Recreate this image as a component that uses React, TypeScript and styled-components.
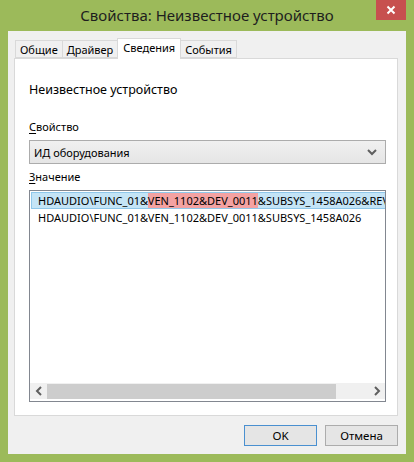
import { FC } from 'react';
import styled, { createGlobalStyle } from 'styled-components';

const GlobalStyle = createGlobalStyle`
html, body {
    margin: 0;
    padding: 0;
    background: #9cba5a;
}
body {
    font-family: "Noto Sans", "Open Sans", sans-serif;
    font-size: 11px;
    color: #000;
}
`;

const Window = styled.div`
width: 414px;
height: 462px;
background: #9cba5a;
display: flex;
flex-direction: column;
box-sizing: border-box;
padding: 0 8px 8px;
`;

const TitleBar = styled.div`
height: 31px;
display: grid;
grid-template-columns: 30px 1fr 30px;
align-items: start;

h1{
    grid-column: 2;
    margin: 0;
    font-size: 15px;
    font-weight: 400;
    line-height: 30px;
    text-align: center;
    color: #1e1e1e;
}
`;

const CloseButton = styled.button`
grid-column: 3;
width: 30px;
height: 20px;
border: none;
padding: 0;
background: #c7504f;
color: #fff;
display: flex;
align-items: center;
justify-content: center;
`;

const Client = styled.div`
flex: 1;
background: #f0f0f0;
display: flex;
flex-direction: column;
padding: 7px 8px 8px 6px;
`;

const Tabs = styled.div`
display: flex;
align-items: flex-end;
padding-left: 1px;
height: 20px;
`;

const Tab = styled.div<{ $active?: boolean }>`
box-sizing: border-box;
height: ${p => (p.$active ? '21px' : '18px')};
padding: 0 ${p => (p.$active ? '5px' : '4px')};
margin-right: -1px;
border: 1px solid #d9d9d9;
border-bottom: ${p => (p.$active ? 'none' : '1px solid #d9d9d9')};
background: ${p => (p.$active ? '#fff' : '#f0f0f0')};
position: relative;
z-index: ${p => (p.$active ? 2 : 1)};
line-height: 17px;
margin-bottom: ${p => (p.$active ? '-1px' : '0')};
white-space: nowrap;
`;

const Panel = styled.div`
height: 358px;
box-sizing: border-box;
background: #fff;
border: 1px solid #d9d9d9;
padding: 22px 11px 13px 14px;
display: flex;
flex-direction: column;
`;

const DeviceName = styled.div`
font-size: 12.5px;
line-height: 18px;
margin-bottom: 20px;
`;

const Label = styled.div`
line-height: 16px;
margin-bottom: 5px;
u{
    text-decoration: underline;
    text-underline-offset: 2px;
}
`;

const Select = styled.div`
height: 24px;
box-sizing: border-box;
border: 1px solid #acacac;
background: linear-gradient(#f0f0f0, #e5e5e5);
display: flex;
align-items: center;
padding: 0 8px 0 4px;
margin-bottom: 5px;

span{
    flex: 1;
}
`;

const List = styled.div`
flex: 1;
border: 1px solid #828790;
display: flex;
flex-direction: column;
overflow: hidden;
`;

const Rows = styled.div`
flex: 1;
padding: 1px 0 0 1px;
`;

const Row = styled.div<{ $selected?: boolean }>`
height: 17px;
box-sizing: border-box;
line-height: 15px;
padding-left: 6px;
white-space: nowrap;
overflow: hidden;
background: ${p => (p.$selected ? '#c4e4f6' : 'transparent')};
border: 1px solid ${p => (p.$selected ? '#8fc7ea' : 'transparent')};
border-right: none;

mark{
    background: #f4a2a2;
    color: inherit;
}
`;

const ScrollBar = styled.div`
height: 16px;
margin: 0 0 2px;
background: #f0f0f0;
display: flex;
align-items: center;
`;

const ScrollArrow = styled.div`
width: 17px;
height: 16px;
display: flex;
align-items: center;
justify-content: center;
`;

const Thumb = styled.div`
flex: 0 0 289px;
height: 15px;
background: #cdcdcd;
`;

const Footer = styled.div`
display: flex;
justify-content: flex-end;
gap: 8px;
padding-top: 9px;
`;

const Button = styled.button<{ $default?: boolean }>`
width: 73px;
height: 21px;
box-sizing: border-box;
border: 1px solid ${p => (p.$default ? '#4a90d0' : '#acacac')};
background: #e5e5e5;
font: inherit;
font-size: 11.5px;
color: #000;
padding: 0;
`;

const Chevron: FC<{ dir: 'left' | 'right' | 'down' }> = ({ dir }) => {
    const d = dir === 'left' ? 'M6 1 L2 5 L6 9' : dir === 'right' ? 'M2 1 L6 5 L2 9' : 'M1 3 L5 7 L9 3';
    const size = dir === 'down' ? [10, 10] : [8, 10];
    return (
        <svg width={size[0]} height={size[1]} viewBox={`0 0 ${size[0]} ${size[1]}`}>
            <path d={d} fill="none" stroke="#5f5f5f" strokeWidth="2" />
        </svg>
    );
};

export default function App() {
    return (
        <>
            <GlobalStyle />
            <Window>
                <TitleBar>
                    <h1>Свойства: Неизвестное устройство</h1>
                    <CloseButton aria-label="Закрыть">
                        <svg width="10" height="10" viewBox="0 0 10 10">
                            <path d="M1.5 1.5 L8.5 8.5 M8.5 1.5 L1.5 8.5" stroke="#fff" strokeWidth="2" />
                        </svg>
                    </CloseButton>
                </TitleBar>
                <Client>
                    <Tabs>
                        <Tab>Общие</Tab>
                        <Tab>Драйвер</Tab>
                        <Tab $active>Сведения</Tab>
                        <Tab>События</Tab>
                    </Tabs>
                    <Panel>
                        <DeviceName>Неизвестное устройство</DeviceName>
                        <Label><u>С</u>войство</Label>
                        <Select>
                            <span>ИД оборудования</span>
                            <Chevron dir="down" />
                        </Select>
                        <Label><u>З</u>начение</Label>
                        <List>
                            <Rows>
                                <Row $selected>
                                    HDAUDIO\FUNC_01&amp;<mark>VEN_1102&amp;DEV_0011</mark>&amp;SUBSYS_1458A026&amp;REV_1001
                                </Row>
                                <Row>HDAUDIO\FUNC_01&amp;VEN_1102&amp;DEV_0011&amp;SUBSYS_1458A026</Row>
                            </Rows>
                            <ScrollBar>
                                <ScrollArrow><Chevron dir="left" /></ScrollArrow>
                                <Thumb />
                                <span style={{ flex: 1 }} />
                                <ScrollArrow><Chevron dir="right" /></ScrollArrow>
                            </ScrollBar>
                        </List>
                    </Panel>
                    <Footer>
                        <Button $default>OK</Button>
                        <Button>Отмена</Button>
                    </Footer>
                </Client>
            </Window>
        </>
    );
}
